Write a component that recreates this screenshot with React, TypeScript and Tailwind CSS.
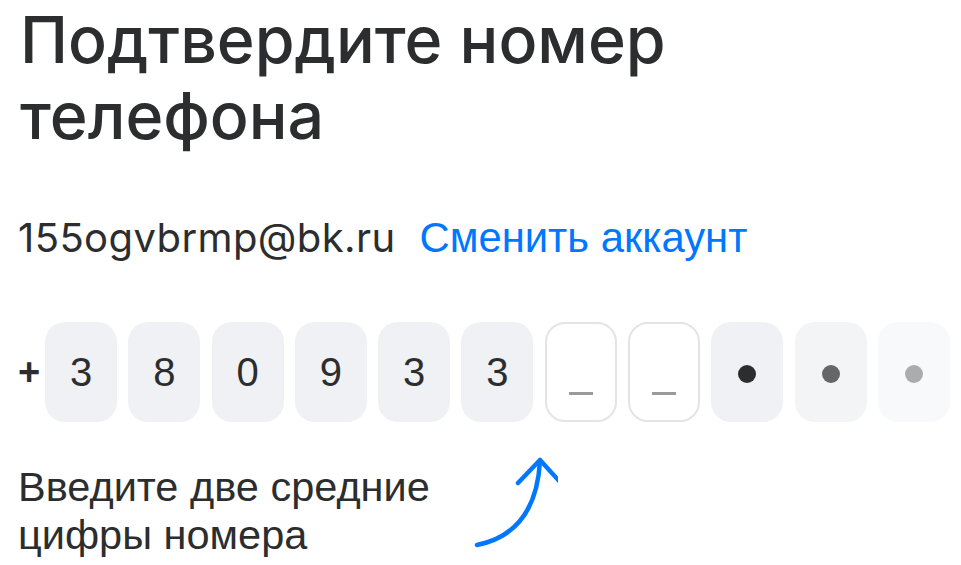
import React from "react";

const digits = ["3", "8", "0", "9", "3", "3"];

const Cell = ({ children, className }: { children?: React.ReactNode; className: string }) => (
  <div className={`flex h-[100px] w-[72px] shrink-0 items-center justify-center rounded-[20px] ${className}`}>
    {children}
  </div>
);

export default function App() {
  return (
    <div className="h-[565px] w-[961px] overflow-hidden bg-white pl-[18px] text-[#2c2d2e]">
      {/* Header */}
      <h1 className="pl-[2px] pt-[2px] font-['Inter',sans-serif] text-[64.5px] font-medium leading-[76px]">
        Подтвердите номер
        <br />
        телефона
      </h1>

      {/* Account */}
      <div className="mt-[60px] flex items-baseline gap-[24px] leading-[48px]">
        <span className="font-['Inter',sans-serif] text-[40px] tracking-[0.4px]">155ogvbrmp@bk.ru</span>
        <span className="font-['Liberation_Sans',Arial,sans-serif] text-[41.8px] text-[#0077ff]">Сменить аккаунт</span>
      </div>

      {/* Phone cells */}
      <div className="mt-[60px] flex items-center">
        <span className="mr-[7px] w-[20px] font-['Liberation_Sans',Arial,sans-serif] text-[38px] font-bold leading-none">+</span>
        <div className="flex gap-[11.3px] font-['Liberation_Sans',Arial,sans-serif] text-[40px]">
          {digits.map((d, i) => (
            <Cell key={i} className="bg-[#f0f1f4]">
              {d}
            </Cell>
          ))}
          <Cell className="border-2 border-[#e3e4e8] bg-white">
            <div className="mt-[42px] h-[3px] w-[24px] bg-[#9a9a9c]" />
          </Cell>
          <Cell className="border-2 border-[#e3e4e8] bg-white">
            <div className="mt-[42px] h-[3px] w-[24px] bg-[#9a9a9c]" />
          </Cell>
          <Cell className="bg-[#f0f1f4]">
            <div className="mt-[4px] h-[18px] w-[18px] rounded-full bg-[#2c2d2e]" />
          </Cell>
          <Cell className="bg-[#f3f4f6]">
            <div className="mt-[4px] h-[18px] w-[18px] rounded-full bg-[#666667]" />
          </Cell>
          <Cell className="bg-[#f8f9fa]">
            <div className="mt-[4px] h-[18px] w-[18px] rounded-full bg-[#acacad]" />
          </Cell>
        </div>
      </div>

      {/* Hint */}
      <div className="mt-[41px] flex items-start">
        <p className="w-[440px] shrink-0 font-['Liberation_Sans',Arial,sans-serif] text-[41.5px] leading-[48px]">
          Введите две средние
          <br />
          цифры номера
        </p>
        <svg width="100" height="100" viewBox="0 0 100 100" className="-mt-[6px]" fill="none">
          <path
            d="M19 88 Q 78 76 82 4"
            stroke="#0077ff"
            strokeWidth="4.5"
            strokeLinecap="round"
          />
          <path
            d="M60 26 L82 3 L103 26"
            stroke="#0077ff"
            strokeWidth="4.5"
            strokeLinecap="round"
            strokeLinejoin="round"
          />
        </svg>
      </div>
    </div>
  );
}
